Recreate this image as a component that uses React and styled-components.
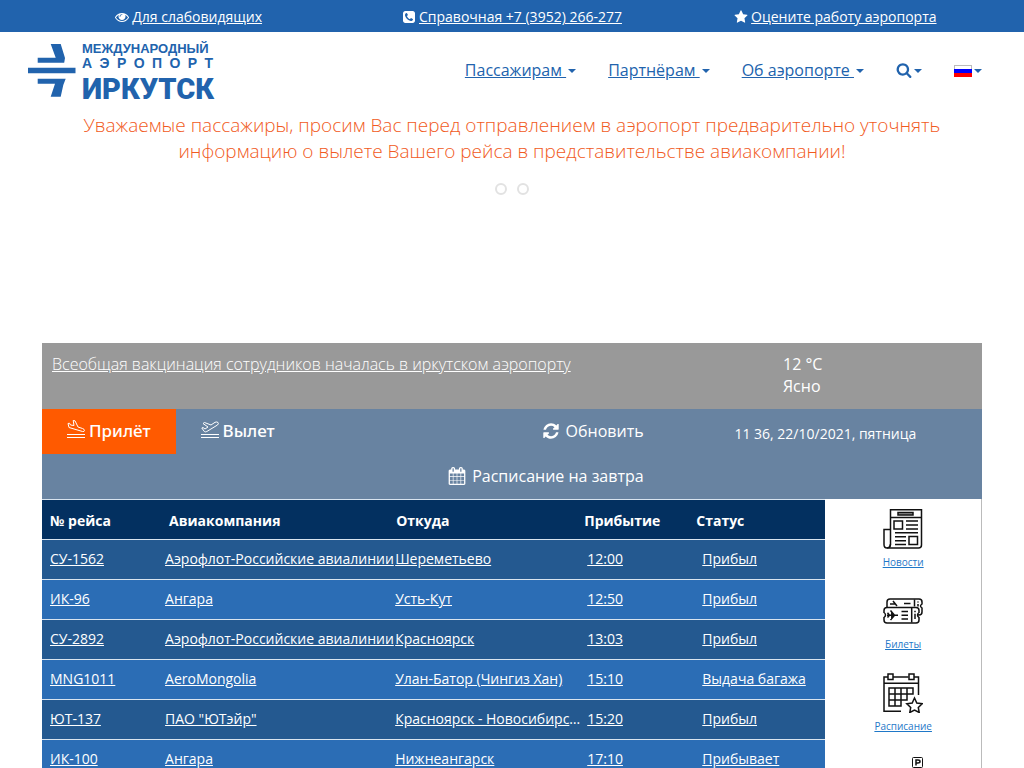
import React from "react";
import styled, { createGlobalStyle } from "styled-components";

const GlobalStyle = createGlobalStyle`
  * {
    box-sizing: border-box;
  }
  body {
    margin: 0;
    background: #fff;
    color: #fff;
    font-family: "Open Sans", "Noto Sans", sans-serif;
    font-size: 14px;
    line-height: 20px;
  }
  a {
    color: inherit;
  }
`;

const Container = styled.div`
  max-width: 970px;
  margin: 0 auto;
`;

const TopBar = styled.div`
  background: #2163ad;
`;

const TopLinks = styled(Container)`
  display: grid;
  grid-template-columns: repeat(3, 1fr);
`;

const TopItem = styled.div`
  display: flex;
  align-items: center;
  justify-content: center;
  gap: 3px;
  height: 32px;
  padding-top: 2px;
`;

const Glyph = styled.svg`
  width: ${(p) => p.$size}px;
  height: ${(p) => p.$size}px;
  flex: none;
  fill: currentColor;
`;

const Header = styled(Container)`
  display: flex;
  justify-content: space-between;
  align-items: flex-start;
  height: 74px;
  padding: 10px 15px 0 1px;
`;

const Logo = styled.a`
  display: flex;
  gap: 6px;
  color: #2163ad;
  text-decoration: none;
  font-family: "Liberation Sans", Arial, sans-serif;
  font-weight: 700;
`;

const LogoMark = styled.svg`
  width: 48px;
  height: 60px;
  fill: currentColor;
`;

const LogoText = styled.div`
  width: 131px;
`;

const LogoLine = styled.div`
  font-size: ${(p) => p.$size}px;
  line-height: ${(p) => p.$height}px;
  white-space: nowrap;
  text-align-last: justify;
`;

const LogoName = styled(LogoLine)`
  font-family: Roboto, "Liberation Sans", sans-serif;
  font-weight: 900;
`;

const Nav = styled.nav`
  display: flex;
  gap: 32px;
  padding-top: 17px;
`;

const NavLink = styled.a`
  display: flex;
  align-items: center;
  color: #2163ad;
  font-size: 16px;
  line-height: 22px;
  white-space: pre;
`;

const Caret = styled.span`
  margin-left: 2px;
  margin-top: 2px;
  border-top: 4px solid #2163ad;
  border-left: 4px solid transparent;
  border-right: 4px solid transparent;
`;

const Flag = styled.svg`
  width: 18px;
  height: 12px;
  margin-top: 2px;
`;

const Notice = styled.p`
  max-width: 940px;
  margin: 6px auto 0;
  color: #f15a22;
  font-size: 19px;
  font-weight: 350;
  line-height: 26px;
  text-align: center;
`;

const Slider = styled.div`
  display: flex;
  justify-content: center;
  align-items: flex-start;
  gap: 10px;
  height: 179px;
  padding-top: 19px;
`;

const Dot = styled.button`
  width: 12px;
  height: 12px;
  padding: 0;
  border: 2px solid #e2e2e2;
  border-radius: 50%;
  background: #fff;
`;

const Main = styled.main`
  max-width: 940px;
  margin: 0 auto;
`;

const NewsBar = styled.div`
  display: grid;
  grid-template-columns: 731fr 199fr;
  padding: 10px 0 12px 10px;
  background: #999;
  font-size: 16px;
  line-height: 22px;
`;

const NewsLink = styled.a`
  font-weight: 300;
`;

const Board = styled.div`
  display: grid;
  grid-template-columns: repeat(3, 1fr);
  background: #6883a1;
`;

const Tabs = styled.div`
  display: flex;
  align-items: flex-start;
`;

const Actions = styled.div`
  display: flex;
  flex-direction: column;
  align-items: flex-end;
`;

const BarButton = styled.button`
  display: flex;
  align-items: center;
  gap: ${(p) => p.$gap}px;
  height: 45px;
  padding: 0 25px 2px;
  border: 0;
  background: ${(p) => (p.$active ? "#ff5a00" : "transparent")};
  color: #fff;
  font: inherit;
  font-size: ${(p) => p.$size}px;
  font-weight: ${(p) => p.$weight};
  white-space: nowrap;
`;

const TabButton = styled(BarButton)`
  font-family: "Noto Sans", "Open Sans", sans-serif;
`;

const PlaneIcon = styled.svg`
  width: 18px;
  height: 18px;
  margin-bottom: 4px;
  fill: none;
  stroke: #fff;
`;

const DateText = styled.div`
  padding-top: 15px;
  text-align: center;
`;

const Content = styled.div`
  display: grid;
  grid-template-columns: 5fr 1fr;
`;

const Table = styled.table`
  display: block;
  border-top: 1px solid #d9e4ef;
`;

const TableHead = styled.thead`
  display: block;
`;

const TableBody = styled.tbody`
  display: block;
`;

const Row = styled.tr`
  display: grid;
  grid-template-columns: 115fr 230fr 192fr 115fr 123fr;
  height: 40px;
  padding-left: 8px;
  border-bottom: 1px solid #d9e4ef;
  background: ${(p) => (p.$odd ? "#245990" : "#2b6db5")};
`;

const HeadRow = styled(Row)`
  grid-template-columns: 119fr 227fr 188fr 112fr 129fr;
  background: #033060;
`;

const Cell = styled.td`
  min-width: 0;
  padding: 9px 0 0;
  white-space: nowrap;
`;

const HeadCell = styled.th`
  padding: 11px 0 0;
  font-weight: 700;
  text-align: left;
`;

const SideMenu = styled.aside`
  display: flex;
  flex-direction: column;
  align-items: center;
  gap: 21px;
  padding-top: 10px;
  border-right: 1px solid #bbb;
`;

const SideLink = styled.a`
  display: flex;
  flex-direction: column;
  align-items: center;
  gap: 5px;
  color: #1f78c8;
  font-size: 10px;
  line-height: 16px;
`;

const SideIcon = styled.svg`
  width: 40px;
  height: 40px;
  fill: none;
  stroke: #111;
  stroke-width: 1.5;
`;

const icons = {
  eye: "M1664 960q-152-236-381-353 61 104 61 225 0 185-131.500 316.500t-316.500 131.500-316.500-131.500-131.500-316.500q0-121 61-225-229 117-381 353 133 205 333.500 326.500t434.500 121.500 434.500-121.500 333.500-326.500zm-720-384q0-20-14-34t-34-14q-125 0-214.500 89.500t-89.500 214.500q0 20 14 34t34 14 34-14 14-34q0-86 61-147t147-61q20 0 34-14t14-34zm848 384q0 34-20 69-140 230-376.500 368.500t-499.500 138.500-499.500-139-376.500-368q-20-35-20-69t20-69q140-229 376.500-368t499.500-139 499.500 139 376.500 368q20 35 20 69z",
  phone:
    "M1408 1193q0-11-2-16-3-8-38.500-29.500t-88.500-49.500l-53-29q-5-3-19-13t-25-15-21-5q-18 0-47 32.500t-57 65.500-44 33q-7 0-16.500-3.500t-15.500-6.500-17-9.500-14-8.500q-99-55-170.500-126.500t-126.500-170.500q-2-3-8.500-14t-9.500-17-6.500-15.500-3.500-16.500q0-13 20.500-33.500t45-38.500 45-39.500 20.500-36.500q0-10-5-21t-15-25-13-19q-3-6-15-28.500t-25-45.500-26.500-47.500-25-40.500-16.500-18-16-2q-48 0-101 22-46 21-80 94.500t-34 130.500q0 16 2.500 34t5 30.500 9 33 10 29.500 12.500 33 11 30q60 164 216.500 320.500t320.500 216.500q6 2 30 11t33 12.500 29.500 10 33 9 30.500 5 34 2.500q57 0 130.500-34t94.500-80q22-53 22-101zm256-777v960q0 119-84.500 203.500t-203.500 84.500h-960q-119 0-203.500-84.500t-84.500-203.500v-960q0-119 84.500-203.500t203.500-84.500h960q119 0 203.500 84.500t84.500 203.500z",
  star: "M1728 647q0 22-26 48l-363 354 86 500q1 7 1 20 0 21-10.500 35.500t-30.500 14.500q-19 0-40-12l-449-236-449 236q-22 12-40 12-21 0-31.500-14.500t-10.500-35.500q0-6 2-20l86-500-364-354q-25-27-25-48 0-37 56-46l502-73 225-455q19-41 49-41t49 41l225 455 502 73q56 9 56 46z",
  search:
    "M1216 832q0-185-131.500-316.500t-316.500-131.500-316.500 131.500-131.500 316.500 131.500 316.500 316.500 131.500 316.500-131.500 131.500-316.500zm512 832q0 52-38 90t-90 38q-54 0-90-38l-343-342q-179 124-399 124-143 0-273.500-55.500t-225-150-150-225-55.500-273.500 55.500-273.500 150-225 225-150 273.500-55.500 273.500 55.500 225 150 150 225 55.500 273.500q0 220-124 399l343 343q37 37 37 90z",
  refresh:
    "M1639 1056q0 5-1 7-64 268-268 434.500t-478 166.500q-146 0-282.500-55t-243.500-157l-129 129q-19 19-45 19t-45-19-19-45v-448q0-26 19-45t45-19h448q26 0 45 19t19 45-19 45l-137 137q71 66 161 102t187 36q134 0 250-65t186-179q11-17 53-117 8-23 30-23h192q13 0 22.500 9.500t9.500 22.500zm25-800v448q0 26-19 45t-45 19h-448q-26 0-45-19t-19-45 19-45l138-138q-148-137-349-137-134 0-250 65t-186 179q-11 17-53 117-8 23-30 23h-199q-13 0-22.500-9.500t-9.500-22.500v-7q65-268 270-434.500t480-166.500q146 0 284 55.500t245 156.500l130-129q19-19 45-19t45 19 19 45z",
  calendar:
    "M192 1664h288v-288h-288v288zm352 0h320v-288h-320v288zm-352-352h288v-320h-288v320zm352 0h320v-320h-320v320zm-352-384h288v-288h-288v288zm736 736h320v-288h-320v288zm-384-736h320v-288h-320v288zm768 736h288v-288h-288v288zm-384-352h320v-320h-320v320zm-352-864v-288q0-13-9.500-22.500t-22.500-9.500h-64q-13 0-22.500 9.500t-9.500 22.500v288q0 13 9.500 22.500t22.500 9.500h64q13 0 22.500-9.500t9.500-22.500zm736 864h288v-320h-288v320zm-384-384h320v-288h-320v288zm384 0h288v-288h-288v288zm32-480v-288q0-13-9.500-22.500t-22.500-9.500h-64q-13 0-22.500 9.500t-9.500 22.500v288q0 13 9.500 22.500t22.500 9.500h64q13 0 22.500-9.500t9.500-22.500zm384-64v1280q0 52-38 90t-90 38h-1408q-52 0-90-38t-38-90v-1280q0-52 38-90t90-38h128v-96q0-66 47-113t113-47h64q66 0 113 47t47 113v96h384v-96q0-66 47-113t113-47h64q66 0 113 47t47 113v96h128q52 0 90 38t38 90z",
};

const Icon = ({ name, size }) => (
  <Glyph viewBox="0 0 1792 1792" $size={size} aria-hidden="true">
    <path d={icons[name]} />
  </Glyph>
);

const NewsIcon = () => (
  <SideIcon viewBox="0 0 40 40">
    <path d="M7.500 .8H38.500V36q0 3-3 3H4q3.500 0 3.500-4zM7.500 8.500H38.500" />
    <path d="M7.500 20.500H1V35.500q0 3.500 3 3.500t3.500-4" />
    <path d="M15 3.500h15v2.500H15z" fill="#999" />
    <path d="M11 12h8.500v8H11zM26 27.500h8.500v8H26z" />
    <path d="M23 12h12M23 16h12M23 20h12M12 23.800h23M12 27.800h11M12 31.800h11M12 35.500h11" />
  </SideIcon>
);

const TicketIcon = () => (
  <SideIcon viewBox="0 0 40 40">
    <path d="M4 17V11q0-3 3-3H36q3 0 3 3v2q-1.500 1-1.500 2t1.500 2v4q0 3-3 3z" />
    <path d="M21 12.500h6.500M31.500 8.500v7M35 13v2.500M35 10.500v1M7 13h5M10 10l4 5" />
    <path
      d="M4 16.500H33q3 0 3 3v2q-1.500 1-1.500 2.500t1.500 2.500v2.500q0 3-3 3H4q-3 0-3-3v-2.500q1.500-1 1.500-2.500T1 21.500v-2q0-3 3-3z"
      fill="#fff"
    />
    <path d="M18.500 20.500H25M18.500 24.200H25M18.500 28H25M28.700 17v14.500M32 22.800v5.200M32 19.800v1.400" />
    <path d="M4 24.200h11M7.500 19.500l4 4.700-4 4.700M4.500 21.800l2 2.400-2 2.400M8.800 20.500v7.400" />
  </SideIcon>
);

const ScheduleIcon = () => (
  <SideIcon viewBox="0 0 40 40">
    <path d="M18 38.200H1V4h4M10 4h15.500M31 4h4.500v18M1 10.200h34.500" />
    <path d="M5 1h5v5.500H5zM26 1h5v5.500h-5z" />
    <path d="M6 15h24v6H6zM6 21v12h12V15M12 15v18M24 15v12H6M18 27h6" />
    <path d="M31.500 25l2.300 5 5.400.7-3.900 3.800.9 5-4.700-2.400-4.700 2.400.9-5-3.900-3.800 5.400-.7z" />
  </SideIcon>
);

const ParkingIcon = () => (
  <SideIcon viewBox="0 0 40 40">
    <rect x="29.500" y="2.500" width="10" height="10" rx="1" strokeWidth="1" />
    <path d="M33 10.500V5h2q2 0 2 1.500T35 8h-2M34.500 12.500v26M2 38v-9l3-7h15l3 7v9z" />
  </SideIcon>
);

const flights = [
  { flight: "СУ-1562", airline: "Аэрофлот-Российские авиалинии", from: "Шереметьево", time: "12:00", status: "Прибыл" },
  { flight: "ИК-96", airline: "Ангара", from: "Усть-Кут", time: "12:50", status: "Прибыл" },
  { flight: "СУ-2892", airline: "Аэрофлот-Российские авиалинии", from: "Красноярск", time: "13:03", status: "Прибыл" },
  { flight: "MNG1011", airline: "AeroMongolia", from: "Улан-Батор (Чингиз Хан)", time: "15:10", status: "Выдача багажа" },
  { flight: "ЮТ-137", airline: 'ПАО "ЮТэйр"', from: "Красноярск - Новосибирс", more: true, time: "15:20", status: "Прибыл" },
  { flight: "ИК-100", airline: "Ангара", from: "Нижнеангарск", time: "17:10", status: "Прибывает" },
];

const App = () => (
  <>
    <GlobalStyle />
    <TopBar>
      <TopLinks>
        <TopItem>
          <Icon name="eye" size={14} />
          <a href="#vision">Для слабовидящих</a>
        </TopItem>
        <TopItem>
          <Icon name="phone" size={14} />
          <a href="#phone">Справочная +7 (3952) 266-277</a>
        </TopItem>
        <TopItem>
          <Icon name="star" size={14} />
          <a href="#rate">Оцените работу аэропорта</a>
        </TopItem>
      </TopLinks>
    </TopBar>

    <Header as="header">
      <Logo href="#home">
        <LogoMark viewBox="0 0 48 60">
          <path d="M22.700 2h10l4.300 14-.8 4.700H9.700v-5h18zM0 25.700h47.500v5.600H0zM9.700 36.700h28L35.300 43l-2.600 11.700h-10l4.300-13H9.700z" />
        </LogoMark>
        <LogoText>
          <LogoLine $size={13} $height={13}>МЕЖДУНАРОДНЫЙ</LogoLine>
          <LogoLine $size={14} $height={16}>А Э Р О П О Р Т</LogoLine>
          <LogoName $size={29} $height={36}>ИРКУТСК</LogoName>
        </LogoText>
      </Logo>
      <Nav>
        <NavLink href="#passengers">{"Пассажирам "}<Caret /></NavLink>
        <NavLink href="#partners">{"Партнёрам "}<Caret /></NavLink>
        <NavLink href="#about">{"Об аэропорте "}<Caret /></NavLink>
        <NavLink href="#search" aria-label="Поиск">
          <Icon name="search" size={16} />
          <Caret />
        </NavLink>
        <NavLink href="#language" aria-label="Язык">
          <Flag viewBox="0 0 18 12">
            <rect width="18" height="12" fill="#bbb" />
            <rect x="1" y="1" width="16" height="3" fill="#fff" />
            <rect y="4" width="18" height="4" fill="#00f" />
            <rect y="8" width="18" height="4" fill="#f00" />
          </Flag>
          <Caret />
        </NavLink>
      </Nav>
    </Header>

    <Notice>
      Уважаемые пассажиры, просим Вас перед отправлением в аэропорт
      предварительно уточнять информацию о вылете Вашего рейса в
      представительстве авиакомпании!
    </Notice>

    <Slider>
      <Dot aria-label="Слайд 1" />
      <Dot aria-label="Слайд 2" />
    </Slider>

    <Main>
      <NewsBar>
        <div>
          <NewsLink href="#news">
            Всеобщая вакцинация сотрудников началась в иркутском аэропорту
          </NewsLink>
        </div>
        <div>
          <div>12 °C</div>
          <div>Ясно</div>
        </div>
      </NewsBar>

      <Board>
        <Tabs>
          <TabButton $active $gap={4} $size={17} $weight={500}>
            <PlaneIcon viewBox="0 0 18 18">
              <path d="M0 14.500h18M0 17.500h18M1 3.500l1 4L15.500 11.500q2 .3 2-1t-2-2L11 7 8 .8 6.200.5 7 5.500 3.500 5 2.500 3.200z" />
            </PlaneIcon>
            Прилёт
          </TabButton>
          <TabButton $gap={4} $size={17} $weight={500}>
            <PlaneIcon viewBox="0 0 18 18">
              <path d="M0 14.500h18M0 17.500h18M.8 8l2.500 3.500q1 .8 2.500 0L16.500 5q1.500-1.500.5-2.500t-3-.2L10 5 3.500 2.500 2 3.500 7 7 4 9 2 7.500z" />
            </PlaneIcon>
            Вылет
          </TabButton>
        </Tabs>
        <Actions>
          <BarButton $gap={6} $size={16} $weight={400}>
            <Icon name="refresh" size={18} />
            Обновить
          </BarButton>
          <BarButton $gap={6} $size={16} $weight={400}>
            <Icon name="calendar" size={18} />
            Расписание на завтра
          </BarButton>
        </Actions>
        <DateText>11 36, 22/10/2021, пятница</DateText>
      </Board>

      <Content>
        <Table>
          <TableHead>
            <HeadRow>
              <HeadCell>№ рейса</HeadCell>
              <HeadCell>Авиакомпания</HeadCell>
              <HeadCell>Откуда</HeadCell>
              <HeadCell>Прибытие</HeadCell>
              <HeadCell>Статус</HeadCell>
            </HeadRow>
          </TableHead>
          <TableBody>
            {flights.map(({ flight, airline, from, more, time, status }, i) => (
              <Row key={flight} $odd={i % 2 === 0}>
                <Cell><a href="#flight">{flight}</a></Cell>
                <Cell><a href="#flight">{airline}</a></Cell>
                <Cell><a href="#flight">{from}</a>{more && "…"}</Cell>
                <Cell><a href="#flight">{time}</a></Cell>
                <Cell><a href="#flight">{status}</a></Cell>
              </Row>
            ))}
          </TableBody>
        </Table>
        <SideMenu>
          <SideLink href="#news"><NewsIcon />Новости</SideLink>
          <SideLink href="#tickets"><TicketIcon />Билеты</SideLink>
          <SideLink href="#schedule"><ScheduleIcon />Расписание</SideLink>
          <SideLink href="#parking" aria-label="Парковка"><ParkingIcon /></SideLink>
        </SideMenu>
      </Content>
    </Main>
  </>
);

export default App;
